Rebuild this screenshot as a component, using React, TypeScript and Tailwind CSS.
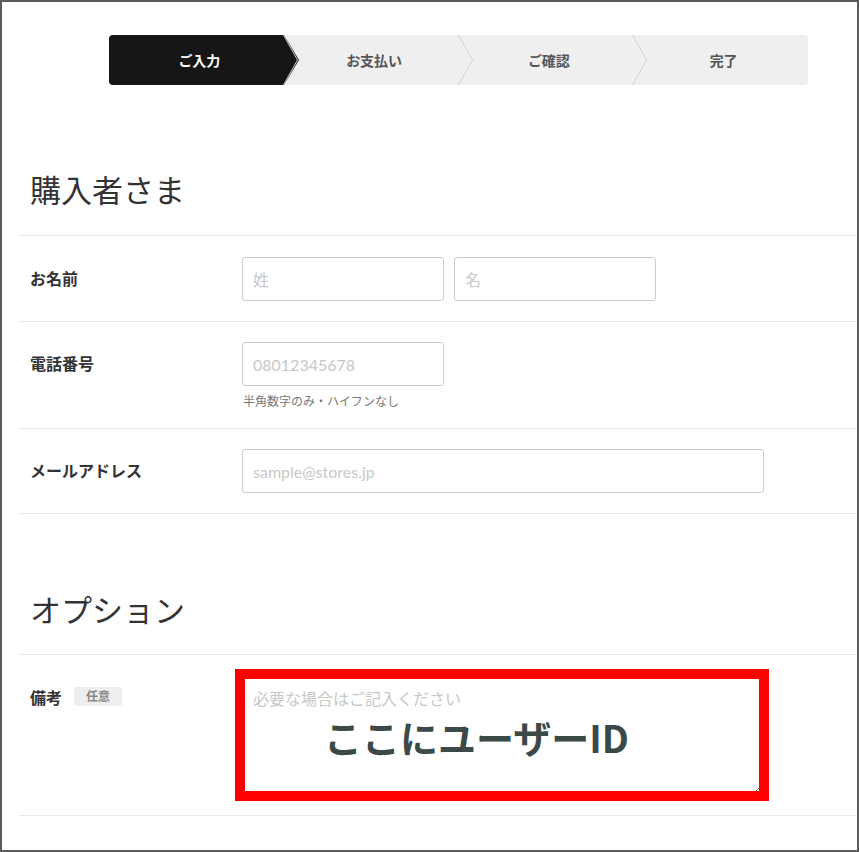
import React from "react";

const steps = ["ご入力", "お支払い", "ご確認", "完了"];

function Stepper() {
  return (
    <div className="ml-[107px] mt-[33px] flex h-[50px] w-[699px] overflow-hidden rounded-[4px] bg-[#efefef]">
      {steps.map((label, i) => (
        <div key={label} className="relative flex h-full w-[175px] items-center justify-center pl-[6px]">
          {i === 0 && (
            <svg className="absolute left-0 top-0 h-[50px] w-[190px]" viewBox="0 0 190 50">
              <polygon points="0,0 175,0 190,25 175,50 0,50" fill="#161616" />
            </svg>
          )}
          {i > 0 && (
            <svg className="absolute -left-[1px] top-0 h-[50px] w-[16px]" viewBox="0 0 16 50">
              <polyline points="0.5,0 14.5,25 0.5,50" fill="none" stroke="#d2d2d2" strokeWidth="1" />
            </svg>
          )}
          <span className={`relative text-[14px] font-bold ${i === 0 ? "text-white" : "text-[#555]"}`}>
            {label}
          </span>
        </div>
      ))}
    </div>
  );
}

function Row({ label, extra, children, className = "" }: { label: string; extra?: React.ReactNode; children: React.ReactNode; className?: string }) {
  return (
    <div className={`flex border-b border-[#e8e8e8] ${className}`}>
      <div className="flex w-[223px] shrink-0 items-start pl-[11px]">
        <span className="text-[16px] font-bold leading-[44px] text-[#333]">{label}</span>
        {extra}
      </div>
      <div>{children}</div>
    </div>
  );
}

const inputCls =
  "h-[44px] rounded-[3px] border border-[#cccccc] bg-white px-[10px] text-[16px] text-[#333] outline-none placeholder:text-[#c8c8c8]";

export default function App() {
  return (
    <div
      className="h-[852px] w-[859px] overflow-hidden border-2 border-[#5a5a5a] bg-white"
      style={{ fontFamily: 'Lato, "Noto Sans CJK JP", sans-serif' }}
    >
      <Stepper />

      <div className="ml-[17px]">
        <h2 className="mt-[83px] border-b border-[#e8e8e8] pb-[23px] pl-[11px] text-[31px] font-normal leading-[44px] text-[#333]">
          購入者さま
        </h2>

        <Row label="お名前" className="pb-[20px] pt-[21px]">
          <div className="flex gap-[10px]">
            <input className={`${inputCls} w-[202px]`} placeholder="姓" />
            <input className={`${inputCls} w-[202px]`} placeholder="名" />
          </div>
        </Row>

        <Row label="電話番号" className="pb-[18px] pt-[20px]">
          <input className={`${inputCls} w-[202px]`} placeholder="08012345678" />
          <p className="mt-[8px] pl-[1px] text-[12px] leading-[16px] text-[#777]">半角数字のみ・ハイフンなし</p>
        </Row>

        <Row label="メールアドレス" className="pb-[20px] pt-[20px]">
          <input className={`${inputCls} w-[522px]`} placeholder="sample@stores.jp" />
        </Row>

        <h2 className="mt-[74px] border-b border-[#e8e8e8] pb-[22px] pl-[11px] text-[31px] font-normal leading-[44px] text-[#333]">
          オプション
        </h2>

        <Row
          label="備考"
          className="pb-[21px] pt-[21px]"
          extra={
            <span className="ml-[12px] mt-[11px] rounded-[3px] bg-[#eeeeee] px-[12px] text-[12px] font-bold leading-[19px] text-[#888]">
              任意
            </span>
          }
        >
          <div className="relative h-[118px] w-[522px]">
            <textarea
              className="block h-[118px] w-[522px] rounded-[3px] border border-[#cccccc] bg-white px-[10px] pt-[10px] text-[16px] leading-[24px] text-[#333] outline-none placeholder:text-[#c8c8c8]"
              placeholder="必要な場合はご記入ください"
            />
            <div className="pointer-events-none absolute -left-[7px] -right-[5px] -top-[7px] bottom-[-7px] border-[10px] border-[#ff0000]" />
            <span
              className="pointer-events-none absolute left-[82px] top-[40px] whitespace-nowrap text-[38px] font-bold leading-[42px] text-[#3b4a47]"
              style={{ fontFamily: '"Noto Sans CJK JP", sans-serif' }}
            >
              ここにユーザーID
            </span>
          </div>
        </Row>
      </div>
    </div>
  );
}
